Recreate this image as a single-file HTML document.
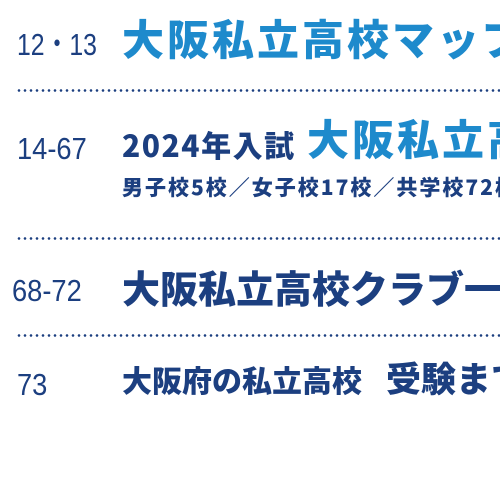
<!DOCTYPE html>
<html><head><meta charset="utf-8"><style>
html,body{margin:0;padding:0;width:500px;height:500px;background:#fff;overflow:hidden}
body{position:relative;font-family:"Liberation Sans","Noto Sans CJK JP",sans-serif;color:#1c3f80}
#w{position:absolute;left:0;top:0;width:500px;height:500px;overflow:hidden}
.a{position:absolute;white-space:nowrap;line-height:1}
.n{font-family:"Liberation Sans",sans-serif;font-size:31px;color:#1c3f80;transform:scaleX(.88);transform-origin:left}
.j{font-family:"Noto Sans CJK JP",sans-serif;font-weight:900}
.dot{position:absolute;left:16px;width:484px;height:3px;background-image:radial-gradient(circle,#1c3f80 1.1px,transparent 1.5px);background-size:6px 3px;background-repeat:repeat-x}
</style></head><body><div id="w">
<div class="a n" style="left:17px;top:29px;transform:scaleX(.8)">12・13</div>
<div class="a j" style="left:122px;top:17px;font-size:42px;letter-spacing:3px;color:#1e8acc">大阪私立高校マップ</div>
<div class="dot" style="top:89px"></div>

<div class="a n" style="left:17px;top:133px">14-67</div>
<div class="a j" style="left:122px;top:129px;font-size:30px;letter-spacing:1.5px;color:#1c3f80">2024年入試</div>
<div class="a j" style="left:307px;top:117px;font-size:42px;letter-spacing:3px;color:#1e8acc">大阪私立高校</div>
<div class="a j" style="left:122px;top:177px;font-size:21px;letter-spacing:2px;color:#1c3f80">男子校5校／女子校17校／共学校72校</div>
<div class="dot" style="top:237px"></div>

<div class="a n" style="left:12px;top:275px">68-72</div>
<div class="a j" style="left:122px;top:268px;font-size:38px;color:#1c3f80">大阪私立高校クラブ一覧</div>
<div class="dot" style="top:334px"></div>

<div class="a n" style="left:17px;top:369px">73</div>
<div class="a j" style="left:122px;top:364px;font-size:30px;color:#1c3f80">大阪府の私立高校</div>
<div class="a j" style="left:386px;top:360px;font-size:35px;color:#1c3f80">受験まで</div>
</div></body></html>
